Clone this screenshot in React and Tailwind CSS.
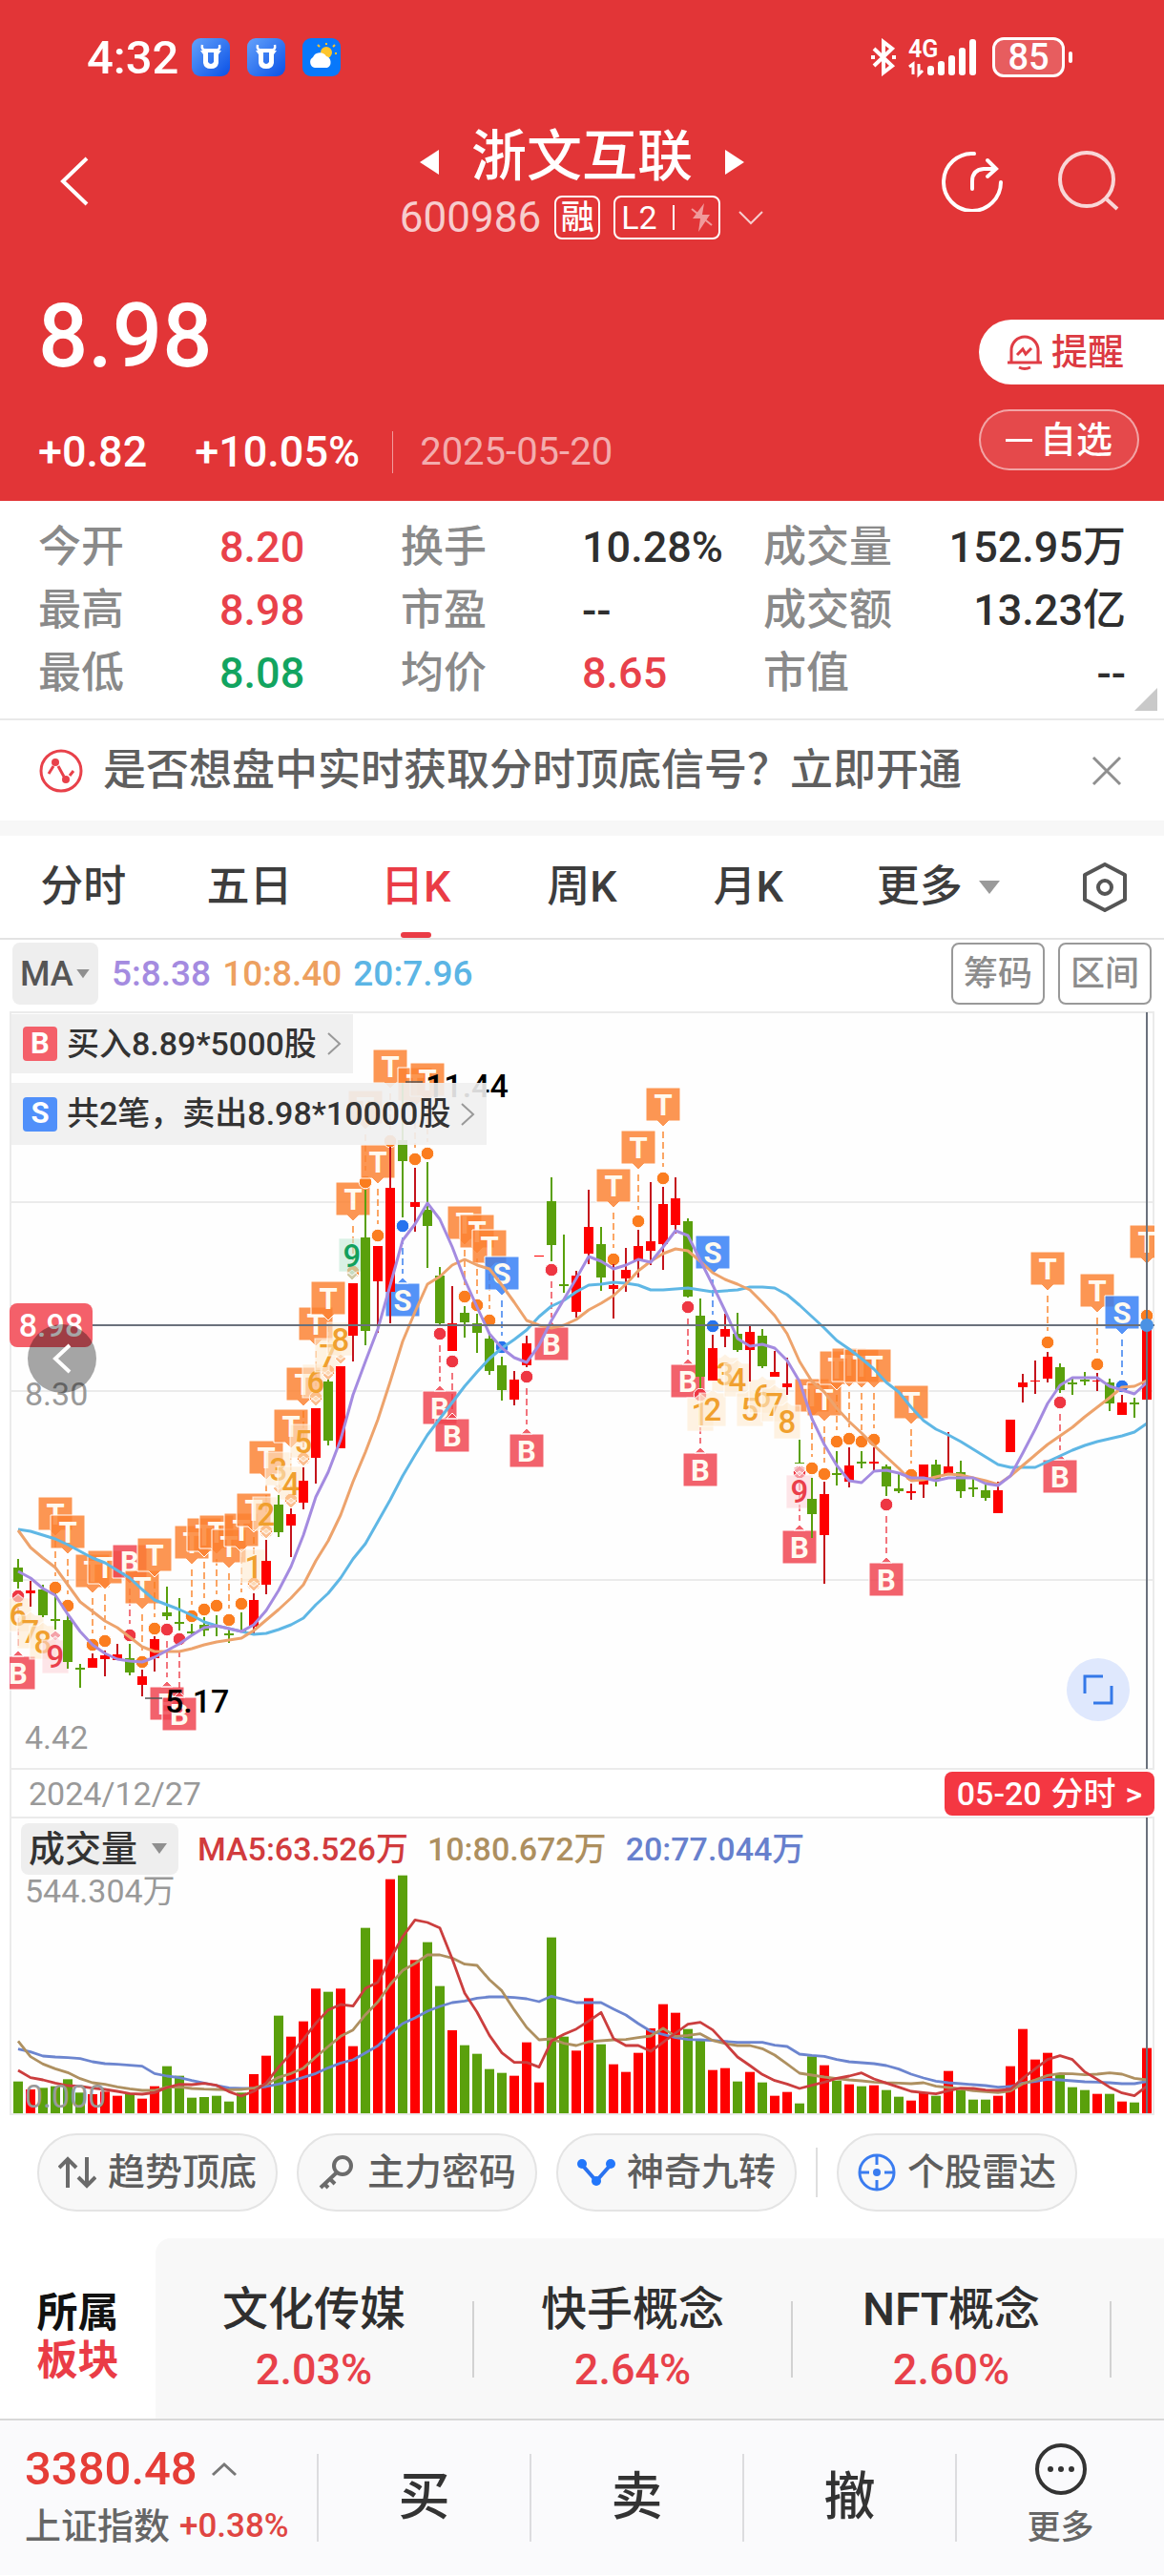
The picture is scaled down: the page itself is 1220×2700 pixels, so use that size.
import React, { useState } from "react";

// [up, body top, body bottom, high, low]
const candles = [
  [0, 1643, 1658, 1634, 1665], [1, 1667, 1670, 1657, 1684], [0, 1666, 1693, 1661, 1695], [0, 1697, 1699, 1670, 1708],
  [0, 1698, 1742, 1693, 1749], [0, 1748, 1750, 1744, 1769], [1, 1738, 1748, 1733, 1748], [1, 1735, 1739, 1730, 1757],
  [1, 1734, 1740, 1723, 1740], [0, 1738, 1753, 1723, 1756], [1, 1757, 1766, 1750, 1778], [1, 1718, 1738, 1715, 1752],
  [0, 1690, 1694, 1663, 1698], [0, 1700, 1702, 1675, 1709], [0, 1710, 1712, 1702, 1715], [0, 1703, 1709, 1695, 1715],
  [0, 1704, 1706, 1693, 1715], [0, 1712, 1714, 1708, 1722], [0, 1708, 1710, 1690, 1710], [1, 1677, 1705, 1670, 1712],
  [1, 1636, 1661, 1614, 1671], [0, 1577, 1606, 1567, 1611], [1, 1587, 1599, 1581, 1632], [1, 1552, 1575, 1538, 1582],
  [1, 1476, 1528, 1476, 1555], [0, 1448, 1510, 1446, 1515], [1, 1432, 1518, 1432, 1518], [1, 1345, 1400, 1345, 1427],
  [0, 1297, 1395, 1247, 1410], [1, 1306, 1343, 1306, 1397], [1, 1245, 1354, 1202, 1387], [0, 1195, 1217, 1135, 1276],
  [1, 1260, 1265, 1224, 1291], [0, 1268, 1285, 1218, 1329], [0, 1337, 1387, 1328, 1388], [1, 1387, 1416, 1348, 1416],
  [0, 1376, 1386, 1369, 1402], [0, 1387, 1397, 1377, 1418], [0, 1403, 1437, 1397, 1441], [0, 1431, 1457, 1422, 1468],
  [1, 1446, 1467, 1437, 1473], [1, 1408, 1431, 1400, 1433], [1, 1316, 1317, 1316, 1317], [0, 1259, 1305, 1234, 1322],
  [0, 1346, 1348, 1294, 1355], [1, 1337, 1375, 1332, 1381], [1, 1286, 1314, 1247, 1325], [0, 1304, 1339, 1286, 1353],
  [1, 1347, 1351, 1325, 1382], [1, 1331, 1340, 1308, 1354], [1, 1306, 1321, 1289, 1339], [1, 1301, 1311, 1239, 1326],
  [1, 1262, 1304, 1244, 1331], [1, 1256, 1284, 1234, 1293], [0, 1280, 1359, 1277, 1360], [0, 1379, 1443, 1361, 1455],
  [1, 1413, 1447, 1399, 1447], [1, 1393, 1401, 1377, 1412], [0, 1398, 1415, 1376, 1417], [1, 1396, 1415, 1390, 1448],
  [0, 1400, 1432, 1393, 1434], [1, 1438, 1443, 1416, 1443], [1, 1450, 1454, 1423, 1462], [0, 1533, 1534, 1509, 1534],
  [0, 1571, 1587, 1549, 1612], [1, 1566, 1609, 1553, 1660], [0, 1544, 1546, 1521, 1557], [1, 1536, 1553, 1517, 1559],
  [0, 1532, 1534, 1521, 1539], [1, 1532, 1534, 1517, 1541], [0, 1537, 1558, 1535, 1568], [0, 1560, 1563, 1545, 1565],
  [1, 1563, 1565, 1555, 1572], [1, 1535, 1556, 1535, 1570], [0, 1535, 1551, 1530, 1558], [1, 1537, 1546, 1501, 1546],
  [0, 1543, 1563, 1531, 1570], [0, 1559, 1561, 1549, 1569], [0, 1562, 1570, 1556, 1573], [1, 1562, 1586, 1553, 1586],
  [1, 1488, 1522, 1488, 1522], [1, 1449, 1454, 1440, 1470], [1, 1447, 1448, 1426, 1461], [1, 1422, 1445, 1417, 1449],
  [0, 1433, 1457, 1429, 1460], [0, 1449, 1451, 1444, 1462], [0, 1446, 1448, 1438, 1452], [1, 1447, 1448, 1439, 1458],
  [0, 1449, 1471, 1445, 1479], [1, 1470, 1483, 1462, 1483], [0, 1470, 1472, 1465, 1486], [1, 1390, 1467, 1390, 1480],
];

const ma5 = [
  1647, 1654, 1665, 1672, 1692, 1710, 1724, 1733, 1739, 1741, 1742, 1737, 1730, 1723, 1714, 1706, 1704, 1707, 1710, 1703,
  1688, 1667, 1642, 1609, 1569, 1543, 1509, 1462, 1427, 1393, 1347, 1300, 1283, 1261, 1278, 1307, 1341, 1370, 1398, 1413,
  1423, 1428, 1410, 1384, 1362, 1340, 1317, 1322, 1330, 1326, 1320, 1323, 1307, 1290, 1295, 1321, 1347, 1374, 1403, 1411,
  1409, 1413, 1426, 1448, 1487, 1514, 1536, 1552, 1554, 1542, 1541, 1544, 1549, 1549, 1552, 1549, 1549, 1549, 1555, 1557,
  1547, 1523, 1498, 1471, 1452, 1444, 1444, 1444, 1453, 1457, 1461, 1449,
];

const ma10 = [
  1604, 1622, 1633, 1643, 1661, 1679, 1689, 1699, 1706, 1716, 1726, 1731, 1731, 1731, 1728, 1724, 1721, 1719, 1717, 1709,
  1698, 1687, 1675, 1661, 1636, 1615, 1588, 1553, 1522, 1488, 1448, 1406, 1375, 1346, 1338, 1326, 1320, 1326, 1330, 1347,
  1365, 1384, 1389, 1392, 1389, 1383, 1373, 1366, 1358, 1346, 1332, 1322, 1314, 1309, 1311, 1322, 1334, 1341, 1346, 1352,
  1365, 1379, 1398, 1427, 1448, 1459, 1476, 1490, 1502, 1515, 1527, 1539, 1552, 1551, 1548, 1545, 1546, 1549, 1552, 1556,
  1547, 1536, 1525, 1514, 1505, 1496, 1485, 1475, 1465, 1454, 1453, 1447,
];

const ma20 = [
  1603, 1605, 1609, 1613, 1619, 1626, 1633, 1638, 1646, 1654, 1666, 1677, 1682, 1687, 1693, 1700, 1704, 1707, 1710, 1713,
  1712, 1708, 1703, 1696, 1682, 1670, 1654, 1634, 1618, 1595, 1572, 1547, 1525, 1504, 1487, 1470, 1453, 1438, 1424, 1413,
  1404, 1394, 1380, 1369, 1363, 1354, 1347, 1346, 1344, 1345, 1347, 1352, 1352, 1351, 1350, 1352, 1354, 1353, 1352, 1349,
  1349, 1350, 1357, 1368, 1380, 1392, 1405, 1414, 1424, 1435, 1449, 1459, 1475, 1489, 1498, 1504, 1511, 1519, 1527, 1535,
  1538, 1538, 1538, 1532, 1526, 1520, 1515, 1511, 1508, 1505, 1501, 1492,
];

// volume series, in thirds of a unit measured from the panel's top
const volumes = [
  845, 870, 865, 860, 838, 880, 885, 877, 890, 885, 899, 860, 797, 827, 896, 894, 890, 908, 880, 822, 764, 638, 704, 656,
  553, 563, 553, 734, 362, 461, 209, 197, 463, 407, 545, 684, 731, 758, 806, 818, 827, 722, 848, 392, 704, 748, 583, 728,
  791, 815, 755, 678, 602, 629, 680, 714, 809, 803, 845, 815, 848, 890, 878, 914, 766, 794, 842, 854, 860, 857, 872, 893,
  905, 881, 890, 812, 872, 902, 902, 890, 797, 680, 776, 755, 823, 863, 872, 884, 884, 908, 911, 740,
];

const vol5 = [
  810, 833, 840, 850, 858, 860, 866, 870, 876, 883, 885, 880, 864, 854, 855, 851, 857, 877, 891, 876, 850, 800, 757, 712,
  662, 620, 603, 608, 552, 533, 460, 390, 337, 345, 362, 460, 567, 627, 700, 755, 785, 785, 800, 718, 697, 680, 655, 628,
  710, 732, 732, 750, 722, 693, 665, 659, 683, 725, 768, 795, 823, 842, 853, 867, 857, 847, 835, 828, 818, 837, 850, 863,
  876, 880, 884, 874, 866, 867, 872, 873, 870, 835, 805, 776, 764, 776, 815, 838, 863, 881, 890, 860,
];

const vol10 = [
  718, 767, 790, 805, 817, 836, 849, 854, 862, 868, 873, 873, 863, 862, 867, 869, 870, 871, 870, 866, 854, 832, 820, 803,
  768, 735, 703, 683, 635, 595, 540, 496, 474, 447, 447, 457, 476, 480, 525, 560, 620, 675, 714, 711, 725, 732, 720, 717,
  714, 713, 707, 702, 678, 703, 700, 695, 716, 726, 732, 732, 742, 762, 790, 819, 825, 831, 836, 840, 843, 847, 849, 850,
  852, 849, 860, 864, 868, 874, 877, 880, 875, 852, 840, 826, 820, 821, 824, 822, 818, 822, 835, 840,
];

const vol20 = [
  743, 752, 765, 768, 770, 773, 783, 789, 791, 794, 797, 820, 828, 833, 842, 850, 858, 865, 867, 866, 861, 853, 844, 832,
  820, 802, 787, 777, 755, 733, 695, 663, 645, 624, 609, 597, 592, 583, 579, 579, 581, 585, 594, 577, 587, 597, 597, 597,
  617, 636, 663, 687, 697, 707, 713, 714, 716, 719, 722, 722, 722, 731, 735, 759, 763, 766, 776, 783, 786, 789, 795, 806,
  822, 834, 844, 849, 852, 855, 858, 863, 861, 850, 845, 838, 840, 843, 846, 847, 849, 852, 852, 845,
];

// [type, candle index, box top, dot y]
const signals = [
  ["B", 0, 1736, 1673], ["T", 3, 1569, 1664], ["T", 4, 1588, 1683], ["T", 6, 1629, 1724], ["T", 7, 1625, 1720],
  ["B", 9, 1619, 1714], ["T", 10, 1646, 1742], ["T", 11, 1612, 1707], ["B", 12, 1768, 1708], ["B", 13, 1779, 1718],
  ["T", 14, 1599, 1694], ["T", 15, 1591, 1687], ["T", 16, 1588, 1683], ["T", 17, 1603, 1698], ["T", 18, 1586, 1681],
  ["T", 19, 1565, 1660], ["T", 20, 1510, 1605], ["T", 22, 1477, 1572], ["T", 23, 1433, 1529], ["T", 24, 1370, 1465],
  ["T", 25, 1343, 1437], ["T", 27, 1239, 1333], ["T", 28, 1143, 1239], ["T", 29, 1200, 1295], ["T", 30, 1100, 1196],
  ["T", 32, 1119, 1215], ["T", 33, 1114, 1209], ["S", 31, 1345, 1285], ["B", 34, 1458, 1398], ["B", 35, 1487, 1427],
  ["T", 36, 1264, 1359], ["T", 37, 1273, 1368], ["T", 38, 1289, 1384], ["S", 39, 1317, 1412], ["B", 41, 1503, 1443],
  ["B", 43, 1391, 1331], ["T", 48, 1225, 1320], ["T", 50, 1185, 1280], ["T", 52, 1140, 1235], ["B", 54, 1430, 1370],
  ["B", 55, 1523, 1462], ["S", 56, 1295, 1390], ["B", 63, 1604, 1543], ["T", 64, 1445, 1539], ["T", 65, 1449, 1545],
  ["T", 66, 1416, 1511], ["T", 67, 1413, 1508], ["T", 68, 1414, 1511], ["T", 69, 1414, 1509], ["B", 70, 1638, 1577],
  ["T", 72, 1452, 1546], ["T", 83, 1312, 1407], ["B", 84, 1530, 1470], ["T", 87, 1335, 1430], ["S", 89, 1358, 1453],
  ["T", 91, 1284, 1379],
];

// [count, x, centre y, pointer direction, colour]
const counts = [
  [6, 19, 1692, -1, "o"], [7, 32, 1710, -1, "o"], [8, 45, 1721, -1, "o"], [9, 58, 1736, -1, "r"],
  [1, 266, 1642, 1, "o"], [3, 292, 1540, 1, "o"], [2, 279, 1587, 1, "o"], [4, 305, 1555, 1, "o"], [5, 318, 1511, 1, "o"],
  [6, 331, 1448, 1, "o"], [7, 344, 1421, 1, "o"], [8, 357, 1404, 1, "o"], [9, 369, 1316, 1, "g"],
  [1, 734, 1482, -1, "o"], [2, 747, 1477, -1, "o"], [3, 760, 1440, -1, "o"], [4, 773, 1446, -1, "o"],
  [5, 786, 1477, -1, "o"], [6, 799, 1463, -1, "o"], [7, 812, 1472, -1, "o"], [8, 825, 1490, -1, "o"], [9, 838, 1563, -1, "r"],
];

const signalColors = {
  T: { box: "#fb8232", dot: "#fb7d1f" },
  B: { box: "#f04450", dot: "#ee3642" },
  S: { box: "#357ef6", dot: "#2673ee" },
};

const countColors = {
  o: { text: "#f0a02e", box: "#fee9cf", dot: "#fbbd8e" },
  r: { text: "#ea3f4b", box: "#fbd3d8", dot: "#f4a2a8" },
  g: { text: "#12a05c", box: "#bfe8d4", dot: "#cfc9a4" },
};

const stats = [
  ["今开", "8.20", "text-[#e8414a]"], ["换手", "10.28%", "text-[#2f2f2f]"], ["成交量", "152.95万", "text-[#2f2f2f]"],
  ["最高", "8.98", "text-[#e8414a]"], ["市盈", "--", "text-[#2f2f2f]"], ["成交额", "13.23亿", "text-[#2f2f2f]"],
  ["最低", "8.08", "text-[#12a460]"], ["均价", "8.65", "text-[#e8414a]"], ["市值", "--", "text-[#2f2f2f]"],
];

const sectors = [
  ["文化传媒", "2.03%"],
  ["快手概念", "2.64%"],
  ["NFT概念", "2.60%"],
];

const px = (i) => Math.round(19 + i * 13.005);
const vy = (v) => 1900 + v / 3;
const toPoints = (list, fn = (v) => v) => list.map((v, i) => `${px(i)},${fn(v)}`).join(" ");

const Signal = ({ type, index, top, dot }) => {
  const x = px(index);
  const c = signalColors[type];
  const above = top < dot;
  const start = above ? top + 46 : dot + 12;
  const end = above ? dot - 12 : top - 10;
  const pointer = above
    ? `L${x + 18} ${top + 35} H${x + 6} L${x} ${top + 41} L${x - 6} ${top + 35} H${x - 18} Z`
    : `L${x + 18} ${top + 35} H${x - 18} Z M${x - 6} ${top} L${x} ${top - 6} L${x + 6} ${top} Z`;
  return (
    <g>
      <line x1={x} x2={x} y1={start} y2={end} stroke={c.dot} strokeWidth="1.6" strokeDasharray="7 4" opacity="0.85" />
      <circle cx={x} cy={dot} r="6.8" fill={c.dot} stroke="#fff" strokeWidth="1" />
      <path d={`M${x - 18} ${top} H${x + 18} ${pointer}`} fill={c.box} fillOpacity="0.84" stroke="#fff" strokeWidth="1" />
      <text x={x} y={top + 29} textAnchor="middle" fontSize="31" fontWeight="700" fill="#fffaf0">{type}</text>
    </g>
  );
};

const Count = ({ n, x, y, dir, tone }) => {
  const c = countColors[tone];
  const tip = dir > 0
    ? `M${x - 14} ${y - 18} H${x + 14} V${y + 17} H${x + 5} L${x} ${y + 21} L${x - 5} ${y + 17} H${x - 14} Z`
    : `M${x - 14} ${y + 18} H${x + 14} V${y - 17} H${x + 5} L${x} ${y - 21} L${x - 5} ${y - 17} H${x - 14} Z`;
  const d = y + dir * 21;
  return (
    <g>
      {(dir > 0 || n === 9) && (
        <path d={`M${x - 6} ${d - 1} L${x} ${d - 6} L${x + 6} ${d - 1} L${x} ${d + 5} Z`} fill={c.dot} stroke="#fff" />
      )}
      <path d={tip} fill={c.box} fillOpacity="0.6" stroke="#fff" strokeOpacity="0.7" strokeWidth="1.2" />
      <text x={x} y={y + 12} textAnchor="middle" fontSize="33" fontWeight="500" fill={c.text}>{n}</text>
    </g>
  );
};

const StatusBar = () => (
  <div className="flex h-[120px] items-center justify-between pl-[91px] pr-[96px]">
    <div className="flex items-center gap-[18px]">
      <span className="-mr-1 text-[49px] leading-none">4:32</span>
      {[0, 1].map((n) => (
        <svg key={n} className="size-10" viewBox="0 0 40 40">
          <defs>
            <linearGradient id={`bull${n}`} x1="0" y1="0" x2="1" y2="1">
              <stop offset="0" stopColor="#63a2fb" />
              <stop offset="1" stopColor="#0a50e6" />
            </linearGradient>
          </defs>
          <rect width="40" height="40" rx="9" fill={`url(#bull${n})`} />
          <path d="M11 7 C10 11 12 13 15 12 M29 7 C30 11 28 13 25 12" stroke="#fff" strokeWidth="2.500" fill="none" />
          <path d="M9 13 Q14 13 15 11 H25 Q26 13 31 13 L28 17 V26 Q27 32 20 32 Q13 32 12 26 V17 Z M17 15 V25 Q20 29 23 25 V15 Z" fill="#fff" fillRule="evenodd" />
        </svg>
      ))}
      <svg className="size-10" viewBox="0 0 40 40">
        <rect width="40" height="40" rx="9" fill="#0878fb" />
        <circle cx="25" cy="15" r="6" fill="#fdc52b" />
        <path d="M25 7v-2M18 9l-2-2M32 9l2-2M34 16h2" stroke="#fdc52b" strokeWidth="2" />
        <path d="M13 31 a6 6 0 0 1 -2 -11 a8 8 0 0 1 14 -1 a6.500 6.500 0 0 1 1 12 Z" fill="#fff" />
      </svg>
    </div>
    <div className="flex items-center">
      <svg className="h-10 w-7" viewBox="0 0 28 40" fill="none" stroke="#fff" strokeWidth="4">
        <path d="M4 11 L23 29 L14 36 V4 L23 11 L4 29" />
        <path d="M1 20h4M23 20h4" />
      </svg>
      <svg className="ml-3 h-10 w-[72px] overflow-visible" viewBox="0 0 72 40" fill="#fff">
        <text x="0" y="20" fontSize="25" fontWeight="600">4G</text>
        <path d="M5 38V27L1 30M11 27V38L15 34" fill="none" stroke="#fff" strokeWidth="3" />
        <rect x="20" y="29" width="7" height="10" rx="3" />
        <rect x="31" y="24" width="7" height="15" rx="3" />
        <rect x="42" y="18" width="7" height="21" rx="3" />
        <rect x="53" y="10" width="7" height="29" rx="3" />
        <rect x="64" y="1" width="7" height="38" rx="3" />
      </svg>
      <span className="ml-4 flex h-[42px] w-[76px] items-center justify-center rounded-xl border-[3px] border-white bg-white/20 text-[38px] leading-none">85</span>
      <span className="ml-1 h-3 w-1 rounded-full bg-white" />
    </div>
  </div>
);

const Header = () => (
  <header className="bg-[#e23537] pb-[25px] text-white">
    <StatusBar />
    <div className="flex h-[140px] items-center px-[47px]">
      <div className="flex-1">
        <button aria-label="返回" className="block pl-[15px]">
          <svg className="h-[52px] w-8" viewBox="0 0 32 52" fill="none" stroke="#fff" strokeWidth="4">
            <path d="M29 2 L4 26 L29 50" />
          </svg>
        </button>
      </div>
      <div className="flex flex-col items-center">
        <div className="flex items-center gap-[34px]">
          <button aria-label="上一只">
            <svg className="mt-3 h-7 w-5" viewBox="0 0 20 28" fill="#fff"><path d="M20 1 V27 L0 14 Z" /></svg>
          </button>
          <h1 className="text-[58px] font-medium leading-[76px]">浙文互联</h1>
          <button aria-label="下一只">
            <svg className="mt-3 h-7 w-5" viewBox="0 0 20 28" fill="#fff"><path d="M0 1 V27 L20 14 Z" /></svg>
          </button>
        </div>
        <div className="flex h-[52px] items-center gap-[14px]">
          <span className="text-[44px] font-normal leading-none text-white/75">600986</span>
          <span className="flex h-[46px] w-12 items-center justify-center rounded-lg border-2 border-white text-[35px] leading-none">融</span>
          <span className="flex h-[46px] w-[112px] items-center justify-between rounded-lg border-2 border-white px-1.5 text-[34px] font-normal leading-none">
            L2
            <i className="h-[26px] w-0.5 bg-white" />
            <svg className="h-8 w-6" viewBox="0 0 24 32" fill="#fff" opacity="0.5">
              <path d="M15 1 L3 17 H11 L9 31 L21 13 H13 Z" />
              <path d="M2 7 L23 24" stroke="#fff" strokeWidth="2" />
            </svg>
          </span>
          <button aria-label="展开" className="ml-1">
            <svg className="h-4 w-7" viewBox="0 0 28 16" fill="none" stroke="#fff" strokeWidth="2" opacity="0.75">
              <path d="M2 2 L14 14 L26 2" />
            </svg>
          </button>
        </div>
      </div>
      <div className="flex flex-1 items-center justify-end gap-[58px]">
        <button aria-label="分享">
          <svg className="size-16" viewBox="0 0 64 64" fill="none" stroke="#fff" strokeWidth="4" strokeLinecap="round">
            <path d="M34 3 A30 30 0 1 0 62 33" />
            <path d="M32 40 V32 Q32 20 44 19 H55" />
            <path d="M48 10 L57 19 L48 27" />
          </svg>
        </button>
        <button aria-label="搜索">
          <svg className="size-16" viewBox="0 0 64 64" fill="none" stroke="#fff" strokeWidth="4" opacity="0.8">
            <circle cx="30" cy="30" r="28" />
            <path d="M51 51 L62 61" />
          </svg>
        </button>
      </div>
    </div>
    <div className="flex justify-between pl-10">
      <div>
        <p className="mt-[38px] text-[92px] leading-[110px]">8.98</p>
        <p className="mt-10 flex items-center text-[45px] leading-[52px]">
          <span>+0.82</span>
          <span className="ml-[50px]">+10.05%</span>
          <i className="ml-[34px] h-11 w-px bg-white/50" />
          <span className="ml-7 text-[40px] font-normal text-white/60">2025-05-20</span>
        </p>
      </div>
      <div className="mt-[75px] flex flex-col items-start gap-[26px]">
        <button className="flex h-[68px] w-[194px] items-center gap-2 rounded-l-full bg-white pl-7 text-[38px] text-[#dc3a42]">
          <svg className="size-10" viewBox="0 0 40 40" fill="none" stroke="#e03d45" strokeWidth="3">
            <path d="M2 31 H38 M6 30 V18 A14 14 0 0 1 34 18 V30" />
            <path d="M14 36 Q20 39 26 36" />
            <path d="M12 23 L18 17 L21 22 L27 16" />
          </svg>
          提醒
        </button>
        <button className="flex h-16 w-[168px] items-center justify-center gap-2 rounded-full border-2 border-white/50 bg-white/10 text-[38px]">
          <i className="h-[3px] w-7 bg-white" />
          自选
        </button>
      </div>
    </div>
  </header>
);

const Stats = () => (
  <section className="relative border-b-2 border-[#e9e9e9] px-10 pb-[14px] pt-4">
    <dl className="grid grid-cols-3 text-[45px] leading-[66px]">
      {stats.map(([label, value, color], i) => (
        <div key={label} className={i % 3 === 2 ? "flex justify-between whitespace-nowrap" : "flex whitespace-nowrap"}>
          <dt className={i % 3 === 2 ? "text-[#8a8a8a]" : "w-1/2 text-[#8a8a8a]"}>{label}</dt>
          <dd className={color}>{value}</dd>
        </div>
      ))}
    </dl>
    <svg className="absolute bottom-2 right-[7px] size-6" viewBox="0 0 24 24" fill="#c9c9c9"><path d="M24 0 V24 H0 Z" /></svg>
  </section>
);

const Notice = () => (
  <section className="flex h-[105px] items-center px-10">
    <svg className="size-12" viewBox="0 0 48 48" fill="none" stroke="#e8414a" strokeWidth="3">
      <circle cx="24" cy="24" r="21" />
      <path d="M11 27 L16 19 M21 19 L27 30 M33 29 L37 24" />
      <circle cx="18" cy="15" r="4" fill="#e8414a" stroke="none" />
      <circle cx="29" cy="33" r="4" fill="#e8414a" stroke="none" />
    </svg>
    <a href="#open" className="ml-5 flex-1 whitespace-nowrap text-[45px] leading-none text-[#5f5f5f]">是否想盘中实时获取分时顶底信号？立即开通</a>
    <button aria-label="关闭">
      <svg className="mr-1 size-8" viewBox="0 0 32 32" stroke="#8f8f8f" strokeWidth="3"><path d="M2 2 L30 30 M30 2 L2 30" /></svg>
    </button>
  </section>
);

const Tabs = () => {
  const [active, setActive] = useState("日K");
  return (
    <nav className="flex h-[109px] border-b-2 border-[#e3e3e3] text-[45px] text-[#3d3d3d]">
      {["分时", "五日", "日K", "周K", "月K"].map((name) => (
        <button
          key={name}
          onClick={() => setActive(name)}
          className={
            name === active
              ? "relative flex w-1/7 items-center justify-center text-[#ea3c46]"
              : "flex w-1/7 items-center justify-center"
          }
        >
          {name}
          {name === active && <i className="absolute bottom-0 h-[6px] w-8 rounded-sm bg-[#ea3c46]" />}
        </button>
      ))}
      <button className="flex flex-1 items-center justify-center gap-4">
        更多
        <svg className="h-4 w-6" viewBox="0 0 24 16" fill="#9a9a9a"><path d="M1 1 H23 L12 15 Z" /></svg>
      </button>
      <button aria-label="设置" className="flex w-[124px] items-center justify-center">
        <svg className="h-[52px] w-12" viewBox="0 0 48 52" fill="none" stroke="#555" strokeWidth="4" strokeLinejoin="round">
          <path d="M24 2 L45 13 V39 L24 50 L3 39 V13 Z" />
          <circle cx="24" cy="26" r="7" />
        </svg>
      </button>
    </nav>
  );
};

const Picker = ({ label, children, className, arrow }) => (
  <span className="relative flex items-center">
    <select aria-label={label} className={className}>
      <option>{children}</option>
    </select>
    <svg className={arrow} viewBox="0 0 16 12" fill="#8f8f8f"><path d="M0 0 H16 L8 11 Z" /></svg>
  </span>
);

const PricePanel = () => (
  <div className="relative">
    <svg className="block w-full" viewBox="0 1056 1220 799">
      <defs>
        <clipPath id="plot"><rect x="10" y="1060" width="1200" height="794" /></clipPath>
      </defs>
      <rect x="11" y="1061" width="1198" height="793" fill="#fefefe" stroke="#ebebeb" strokeWidth="2" />
      {[1260, 1458, 1656].map((y) => (
        <line key={y} x1="11" x2="1209" y1={y} y2={y} stroke="#ebebeb" strokeWidth="2" />
      ))}
      <text x="26" y="1473" fontSize="34" fontWeight="400" fill="#999">8.30</text>
      <text x="26" y="1833" fontSize="34" fontWeight="400" fill="#999">4.42</text>
      <g clipPath="url(#plot)">
        {signals.map(([type, i, top, dot]) => (
          <Signal key={`${type}${i}`} type={type} index={i} top={top} dot={dot} />
        ))}
        {counts.map(([n, x, y, dir, tone]) => (
          <Count key={x} n={n} x={x} y={y} dir={dir} tone={tone} />
        ))}
        {candles.map(([up, top, bottom, high, low], i) => (
          <g key={i}>
            <rect x={px(i) - 1} y={high} width="2" height={low - high} fill={up ? "#c4141c" : "#5aa00c"} />
            <rect x={px(i) - 5} y={top} width="10" height={bottom - top} fill={up ? "#fe0000" : "#5aa00c"} />
          </g>
        ))}
        <g fill="none" strokeWidth="3" strokeLinejoin="round">
          <polyline points={toPoints(ma20)} stroke="#5fb7e5" />
          <polyline points={toPoints(ma10)} stroke="#eda36c" />
          <polyline points={toPoints(ma5)} stroke="#a48be0" />
        </g>
        <path d="M425 1134 H443 M152 1780 H170" stroke="#555" strokeWidth="1.500" />
        <text x="446" y="1150" fontSize="34" fontWeight="500">11.44</text>
        <text x="173" y="1795" fontSize="34" fontWeight="500">5.17</text>
        <path d="M11 1389 H1210 M1202 1061 V1854" stroke="#6a717c" strokeWidth="2" />
        <circle cx="1202" cy="1389" r="7" fill="#4b92e4" />
      </g>
    </svg>

    <div className="absolute left-3 top-[7px] flex flex-col items-start gap-2.5 text-[34px] text-[#333]">
      <button className="flex h-[62px] items-center gap-2.5 bg-[#efefef]/95 px-3">
        <span className="flex size-9 items-center justify-center rounded-sm bg-[#f4606a] text-[31px] font-bold text-white">B</span>
        买入8.89*5000股
        <svg className="h-6 w-4" viewBox="0 0 16 24" fill="none" stroke="#999" strokeWidth="2"><path d="M2 1 L14 12 L2 23" /></svg>
      </button>
      <button className="flex h-[65px] items-center gap-2.5 bg-[#efefef]/90 px-3">
        <span className="flex size-9 items-center justify-center rounded-sm bg-[#5090fa] text-[31px] font-bold text-white">S</span>
        共2笔，卖出8.98*10000股
        <svg className="h-6 w-4" viewBox="0 0 16 24" fill="none" stroke="#999" strokeWidth="2"><path d="M2 1 L14 12 L2 23" /></svg>
      </button>
    </div>
    <span className="absolute left-2.5 top-[310px] flex h-[46px] w-[87px] items-center justify-center rounded-lg bg-[#f4606a] text-[34px] text-white">8.98</span>
    <button aria-label="向左" className="absolute left-[29px] top-[332px] flex size-[72px] items-center justify-center rounded-full bg-black/35">
      <svg className="h-8 w-5" viewBox="0 0 20 32" fill="none" stroke="#fff" strokeWidth="4"><path d="M18 2 L3 16 L18 30" /></svg>
    </button>
    <button aria-label="全屏" className="absolute bottom-[51px] right-9 flex size-[66px] items-center justify-center rounded-full bg-[#dfe8fd]">
      <svg className="size-8" viewBox="0 0 32 32" fill="none" stroke="#3478e8" strokeWidth="3">
        <path d="M2 20 V2 H21 M11 30 H30 V12" />
      </svg>
    </button>
  </div>
);

const VolumePanel = () => (
  <div className="relative">
    <svg className="block w-full" viewBox="0 1904 1220 314">
      <path d="M11 2216 V1905 H1209 V2216 Z" fill="#fefefe" stroke="#ebebeb" strokeWidth="2" />
      {volumes.map((v, i) => (
        <rect key={i} x={px(i) - 5} y={vy(v)} width="10" height={2215 - vy(v)} fill={candles[i][0] ? "#fe0000" : "#5aa00c"} />
      ))}
      <g fill="none" strokeWidth="2.800" strokeLinejoin="round">
        <polyline points={toPoints(vol20, vy)} stroke="#6c85cf" />
        <polyline points={toPoints(vol10, vy)} stroke="#ae9060" />
        <polyline points={toPoints(vol5, vy)} stroke="#cb3e3e" />
      </g>
      <path d="M1202 1905 V2215" stroke="#6a717c" strokeWidth="2" />
      <text x="26" y="1994" fontSize="34" fontWeight="400" fill="#999">544.304万</text>
      <text x="26" y="2209" fontSize="34" fontWeight="400" fill="#999">0.000</text>
    </svg>
    <div className="absolute left-[22px] top-[7px] flex items-center gap-5 text-[34px] leading-none">
      <Picker
        label="副图指标"
        className="h-[54px] w-[165px] appearance-none rounded-lg bg-[#eee] pl-2 text-[38px] leading-none text-[#333]"
        arrow="pointer-events-none absolute right-3 h-3 w-4"
      >
        成交量
      </Picker>
      <span className="text-[#d13b3d]">MA5:63.526万</span>
      <span className="text-[#ad8f5f]">10:80.672万</span>
      <span className="text-[#6780cd]">20:77.044万</span>
    </div>
  </div>
);

const Chart = () => (
  <section>
    <div className="flex h-[71px] items-center pl-[13px] pr-[13px] text-[37px]">
      <Picker
        label="均线指标"
        className="h-[65px] w-[90px] appearance-none rounded-lg bg-[#eee] pl-2 text-[36px] text-[#555]"
        arrow="pointer-events-none absolute right-2 h-2.5 w-4"
      >
        MA
      </Picker>
      <span className="ml-3.5 text-[#a48be0]">5:8.38</span>
      <span className="ml-3 text-[#eda05f]">10:8.40</span>
      <span className="ml-3 text-[#5bb5e5]">20:7.96</span>
      <button className="ml-auto h-[65px] w-[98px] rounded-lg border-2 border-[#999] text-[36px] text-[#8c8c8c]">筹码</button>
      <button className="ml-3.5 h-[65px] w-[98px] rounded-lg border-2 border-[#999] text-[36px] text-[#8c8c8c]">区间</button>
    </div>
    <PricePanel />
    <div className="mx-2.5 flex h-[49px] items-center justify-between border-l-2 border-[#ebebeb] text-[34px] leading-none">
      <span className="pl-[18px] font-normal text-[#999]">2024/12/27</span>
      <a href="#intraday" className="flex h-[46px] w-[220px] items-center justify-center gap-2.5 rounded-lg bg-[#f43742] text-white">
        <span>05-20</span><span>分时</span><span>&gt;</span>
      </a>
    </div>
    <VolumePanel />
  </section>
);

const chip = "flex h-[82px] w-[252px] items-center justify-center gap-3 rounded-full border-2 border-[#e4e4e4] bg-[#f8f8f8]";

const Tools = () => (
  <section className="flex items-center gap-5 px-[39px] pb-7 pt-[18px] text-[39px] leading-none text-[#5e5e5e]">
    <button className={chip}>
      <svg className="h-9 w-10" viewBox="0 0 40 36" fill="none" stroke="#6b6b6b" strokeWidth="4">
        <path d="M10 34 V4 M1 13 L10 4 L19 13 M30 2 V32 M21 23 L30 32 L39 23" />
      </svg>
      趋势顶底
    </button>
    <button className={chip}>
      <svg className="h-9 w-10" viewBox="0 0 40 36" fill="none" stroke="#6b6b6b" strokeWidth="4">
        <circle cx="26" cy="11" r="9" />
        <path d="M20 18 L3 34 M13 25 L18 30 M7 30 L11 34" />
      </svg>
      主力密码
    </button>
    <button className={chip}>
      <svg className="h-8 w-10" viewBox="0 0 40 32">
        <path d="M5 8 L20 25 L35 8" fill="none" stroke="#2a72ef" strokeWidth="4" />
        <circle cx="5" cy="7" r="5" fill="#2377fb" />
        <circle cx="20" cy="25" r="5" fill="#2377fb" />
        <circle cx="35" cy="7" r="5" fill="#2377fb" />
      </svg>
      神奇九转
    </button>
    <i className="h-[52px] w-0.5 bg-[#dedede]" />
    <button className={chip}>
      <svg className="size-10" viewBox="0 0 40 40" fill="none" stroke="#3a7cf0" strokeWidth="3">
        <circle cx="20" cy="20" r="18" />
        <path d="M20 2 V12 M20 28 V38 M2 20 H12 M28 20 H38" />
        <circle cx="20" cy="20" r="4" fill="#3a7cf0" stroke="none" />
      </svg>
      个股雷达
    </button>
  </section>
);

const Sectors = () => (
  <section className="flex h-[189px]">
    <h2 className="flex w-[163px] flex-col items-center justify-center pt-4 text-[43px] font-bold leading-[50px] text-[#111]">
      所属
      <span className="text-[#ea3c46]">板块</span>
    </h2>
    <div className="flex flex-1 items-center overflow-hidden rounded-tl-2xl bg-[#f8f8f8] pt-[18px]">
      {sectors.map(([name, change]) => (
        <a key={name} href="#sector" className="flex w-[334px] items-center justify-between">
          <span className="flex flex-1 flex-col items-center">
            <span className="text-[48px] leading-[68px] text-[#2f2f2f]">{name}</span>
            <span className="text-[45px] leading-[58px] text-[#e8414a]">{change}</span>
          </span>
          <i className="mt-1 h-20 w-0.5 bg-[#d2d2d2]" />
        </a>
      ))}
    </div>
  </section>
);

const BottomBar = () => (
  <footer className="flex h-[164px] items-center border-t-2 border-[#d8d8d8] bg-[#fafafc] text-[#333]">
    <a href="#index" className="w-[332px] whitespace-nowrap pl-[26px]">
      <span className="flex items-center gap-3.5 text-[49px] leading-[60px] text-[#e53d37]">
        3380.48
        <svg className="h-4 w-7" viewBox="0 0 28 16" fill="none" stroke="#777" strokeWidth="3"><path d="M2 14 L14 3 L26 14" /></svg>
      </span>
      <span className="flex items-center gap-2.5 text-[38px] leading-[60px] text-[#666]">
        上证指数
        <span className="text-[35px] text-[#e04542]">+0.38%</span>
      </span>
    </a>
    {["买", "卖", "撤"].map((name) => (
      <button key={name} className="h-[92px] w-[223px] border-l-2 border-[#dcdcdf] text-[54px] leading-none">{name}</button>
    ))}
    <i className="h-[92px] w-0.5 bg-[#dcdcdf]" />
    <button className="flex flex-1 flex-col items-center gap-2 text-[35px] text-[#666]">
      <svg className="size-14" viewBox="0 0 56 56" fill="none" stroke="#333" strokeWidth="4">
        <circle cx="28" cy="28" r="25" />
        <g fill="#333" stroke="none">
          <circle cx="17" cy="28" r="3" />
          <circle cx="28" cy="28" r="3" />
          <circle cx="39" cy="28" r="3" />
        </g>
      </svg>
      更多
    </button>
  </footer>
);

const App = () => (
  <div className="min-h-screen bg-white font-['Roboto','Noto_Sans_CJK_SC',sans-serif] font-medium">
    <Header />
    <Stats />
    <Notice />
    <div className="h-4 bg-[#f7f7f7]" />
    <Tabs />
    <Chart />
    <Tools />
    <Sectors />
    <BottomBar />
  </div>
);

export default App;
